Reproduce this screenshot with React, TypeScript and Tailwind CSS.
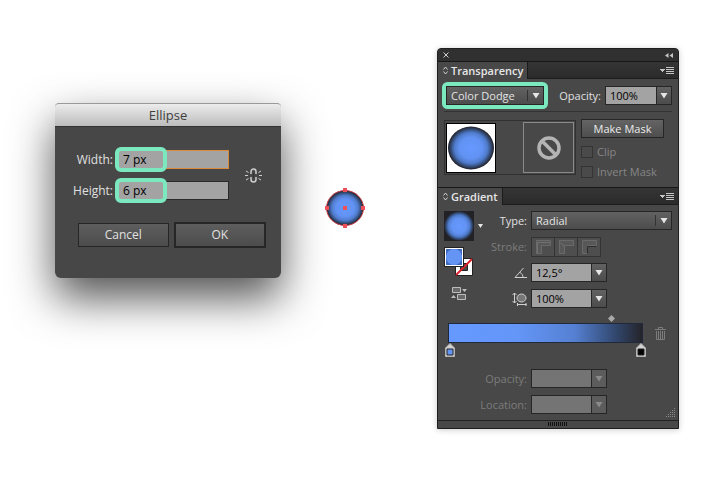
import { useState } from "react";
import type { ReactNode } from "react";

const FONT = "font-['Open_Sans','Noto_Sans',sans-serif]";

function Down({ dim = false }: { dim?: boolean }) {
  return (
    <svg width="8" height="6" viewBox="0 0 8 6" className={dim ? "text-[#8a8a8a]" : "text-[#e6e6e6]"}>
      <path d="M.5 0h7L4 5.500z" fill="currentColor" />
    </svg>
  );
}

function Picker({ id, options, label }: { id: string; options: string[]; label?: string }) {
  return (
    <div className="relative flex-1">
      <select
        id={id}
        aria-label={label}
        className="block h-[19px] w-full appearance-none border border-[#262626] bg-linear-to-b from-[#626262] to-[#4c4c4c] pr-5 pl-1 text-[11px] leading-4 font-medium text-[#e4e4e4] outline-none"
      >
        {options.map((o) => (
          <option key={o}>{o}</option>
        ))}
      </select>
      <span className="pointer-events-none absolute inset-y-1 right-1 flex items-center border-l border-[#333] pl-1">
        <Down />
      </span>
    </div>
  );
}

function Combo({ id, value, disabled = false }: { id: string; value: string; disabled?: boolean }) {
  const [text, setText] = useState(value);
  return (
    <div className="flex h-[19px] w-[76px] border border-[#262626]">
      <input
        id={id}
        value={text}
        disabled={disabled}
        onChange={(e) => setText(e.target.value)}
        className="w-0 min-w-0 flex-1 bg-[#a3a3a3] pl-1 text-[11px] leading-4 text-black outline-none disabled:bg-[#747474]"
      />
      <button
        type="button"
        aria-label="More values"
        disabled={disabled}
        className="flex w-[15px] items-center justify-center border-l border-[#262626] bg-linear-to-b from-[#626262] to-[#4c4c4c] disabled:from-[#5c5c5c] disabled:to-[#5c5c5c]"
      >
        <Down dim={disabled} />
      </button>
    </div>
  );
}

function PanelTab({ title }: { title: string }) {
  return (
    <div className="flex h-[18px] border-t border-[#171717] bg-linear-to-b from-[#353535] to-[#2a2a2a]">
      <h2 className="flex items-center gap-[3px] border-r border-[#1c1c1c] bg-[#484848] pr-1 pl-[5px] text-[11px] leading-4 font-semibold text-[#e6e6e6]">
        <svg width="5" height="9" viewBox="0 0 5 9" fill="none" stroke="#d0d0d0">
          <path d="M.5 3.500l2-2.500 2 2.500M.5 5.500l2 2.500 2-2.500" />
        </svg>
        {title}
      </h2>
      <div className="flex flex-1 items-center justify-end border-b border-[#1c1c1c] pr-1">
        <button type="button" aria-label={title + " menu"}>
          <svg width="14" height="9" viewBox="0 0 14 9" fill="#c4c4c4" shapeRendering="crispEdges">
            <path d="M0 3h5L2.500 6z" />
            <path d="M6 1h8v1H6zM6 3h8v1H6zM6 5h8v1H6zM6 7h8v1H6z" />
          </svg>
        </button>
      </div>
    </div>
  );
}

function SizeField({ id, label, value, active = false }: { id: string; label: string; value: string; active?: boolean }) {
  const [text, setText] = useState(value);
  return (
    <div className="flex items-center gap-1">
      <label htmlFor={id} className="w-[58px] text-right text-xs leading-4 font-medium text-[#e0e0e0]">
        {label}
      </label>
      <div className="relative flex-1">
        <input
          id={id}
          value={text}
          onChange={(e) => setText(e.target.value)}
          className={
            active
              ? "block h-[19px] w-full border border-[#d98a3c] bg-[#a3a3a3] pl-[5px] text-xs leading-4 text-black outline-none"
              : "block h-[19px] w-full border border-[#2a2a2a] bg-[#a3a3a3] pl-[5px] text-xs leading-4 text-black outline-none"
          }
        />
        <span className="pointer-events-none absolute -inset-y-[3px] -left-[2px] w-[52px] rounded-md border-4 border-[#7ce8c0]" />
      </div>
    </div>
  );
}

function LinkIcon() {
  return (
    <svg width="17" height="15" viewBox="0 0 17 15" fill="none" stroke="#cfcfcf">
      <path d="M6 6V3.500a2.500 2.500 0 0 1 5 0V6M6 9v2.500a2.500 2.500 0 0 0 5 0V9" strokeWidth="1.500" />
      <path d="M8.500 5v5" stroke="#333" />
      <path d="M0 7.500h3M14 7.500h3M1 3l2.500 1.500M16 3l-2.500 1.500M1 12l2.500-1.500M16 12l-2.500-1.500" />
    </svg>
  );
}

function EllipseDialog() {
  return (
    <form
      onSubmit={(e) => e.preventDefault()}
      className="mt-[55px] w-full max-w-[226px] rounded-md bg-[#474747] shadow-[0_20px_44px_0_rgba(0,0,0,0.68)]"
    >
      <h1 className="h-[23px] rounded-t-sm border-t border-[#999] bg-linear-to-b from-[#ececec] to-[#bdbdbd] text-center text-[13px] leading-[22px] text-[#404040]">
        Ellipse
      </h1>
      <div className="flex items-center gap-4 border-t border-[#333] pt-[23px] pr-[19px]">
        <div className="flex flex-1 flex-col gap-3">
          <SizeField id="width" label="Width:" value="7 px" active />
          <SizeField id="height" label="Height:" value="6 px" />
        </div>
        <button type="button" aria-label="Constrain proportions">
          <LinkIcon />
        </button>
      </div>
      <div className="mt-[22px] flex items-center gap-[5px] pr-[15px] pb-[30px] pl-[23px]">
        <button type="button" className="h-6 flex-1 border border-[#262626] bg-linear-to-b from-[#5e5e5e] to-[#4c4c4c] text-xs leading-4 font-medium text-[#e0e0e0]">
          Cancel
        </button>
        <button type="submit" className="h-[26px] flex-1 border-2 border-[#262626] bg-linear-to-b from-[#5e5e5e] to-[#4c4c4c] text-xs leading-4 font-medium text-[#e0e0e0]">
          OK
        </button>
      </div>
    </form>
  );
}

function SelectedCircle() {
  return (
    <svg width="40" height="40" viewBox="0 0 40 40" className="mt-[140px] shrink-0">
      <defs>
        <radialGradient id="ball">
          <stop offset="0" stopColor="#6699ff" />
          <stop offset=".5" stopColor="#6192f3" />
          <stop offset=".72" stopColor="#4f7bcb" />
          <stop offset=".88" stopColor="#32486f" />
          <stop offset="1" stopColor="#201f24" />
        </radialGradient>
      </defs>
      <ellipse cx="20" cy="20" rx="18.500" ry="17.500" fill="url(#ball)" stroke="#c8404c" />
      <path d="M18 0h4v4h-4zM18 36h4v4h-4zM0 18h4v4h-4zM36 18h4v4h-4zM18 18h4v4h-4z" fill="#ec4f58" />
    </svg>
  );
}

function Row({ label, id, children }: { label: ReactNode; id: string; children: ReactNode }) {
  return (
    <div className="flex h-[19px] items-center gap-1">
      <label htmlFor={id} className="flex w-[41px] justify-end text-[11px] leading-4 font-medium text-[#e0e0e0]">
        {label}
      </label>
      {children}
    </div>
  );
}

function Transparency() {
  return (
    <section>
      <PanelTab title="Transparency" />
      <div className="flex items-center gap-[15px] pt-[7px] pr-[6px] pb-[6px] pl-2">
        <div className="flex flex-1 rounded-xs ring-4 ring-[#7ce8c0]">
          <Picker id="blend" label="Blending mode" options={["Color Dodge", "Normal", "Multiply", "Screen"]} />
        </div>
        <div className="flex items-center gap-1">
          <label htmlFor="opacity" className="text-[11px] leading-4 font-medium text-[#e0e0e0]">
            Opacity:
          </label>
          <div className="flex w-[67px] [&>div]:w-full">
            <Combo id="opacity" value="100%" />
          </div>
        </div>
      </div>
      <div className="mx-[6px] flex gap-[5px] border-t border-[#333] pt-2 pb-[9px]">
        <div className="flex h-[55px] w-[132px] items-center justify-between border border-[#303030] px-px">
          <svg width="50" height="50" viewBox="0 0 50 50">
            <rect width="50" height="50" fill="#000" />
            <rect x="1" y="1" width="48" height="48" fill="#fff" />
            <ellipse cx="25" cy="25" rx="23" ry="21.500" fill="url(#ball)" />
          </svg>
          <div className="flex size-[51px] items-center justify-center border border-[#8a8a8a]">
            <svg width="24" height="24" viewBox="0 0 24 24" fill="none" stroke="#b4b4b4" strokeWidth="3.500">
              <circle cx="12" cy="12" r="10" />
              <path d="M5 5l14 14" />
            </svg>
          </div>
        </div>
        <div className="flex flex-col items-start gap-2">
          <button type="button" className="-mt-px h-[19px] w-[83px] border border-[#262626] bg-linear-to-b from-[#646464] to-[#4e4e4e] text-[11px] leading-4 font-medium text-[#ececec]">
            Make Mask
          </button>
          {["Clip", "Invert Mask"].map((name) => (
            <label key={name} className="flex h-3 items-center gap-1 text-[11px] leading-3 text-[#868686]">
              <input type="checkbox" disabled className="size-3 appearance-none border border-[#343434] bg-[#4a4a4a]" />
              {name}
            </label>
          ))}
        </div>
      </div>
    </section>
  );
}

function StrokeButtons() {
  const fold = ["M5.500 15.500v-11h13", "M5.500 4.500l4 4", "M9.500 15.500v-7h9"];
  return (
    <div className="flex h-[20px] border border-[#333]">
      {fold.map((d, i) => (
        <button
          key={d}
          type="button"
          disabled
          aria-label={"Stroke gradient " + (i + 1)}
          className="border-r border-[#333] bg-[#4e4e4e] last:border-r-0"
        >
          <svg width="22" height="18" viewBox="0 0 22 18" fill="none">
            <path d="M4.500 15.500v-13h14v5H9.500v8z" fill="#585858" stroke="#6a6a6a" />
            <path d={d} stroke={i === 2 ? "#2c2c2c" : "#707070"} />
          </svg>
        </button>
      ))}
    </div>
  );
}

function GradientTools() {
  return (
    <div className="flex w-[42px] shrink-0 flex-col">
      <button type="button" aria-label="Gradient swatch" className="flex items-center gap-1">
        <svg width="30" height="30" viewBox="0 0 30 30">
          <rect width="30" height="30" fill="#222226" />
          <ellipse cx="15" cy="15" rx="15" ry="15" fill="url(#ball)" />
        </svg>
        <svg width="5" height="4" viewBox="0 0 5 4">
          <path d="M0 0h5L2.500 4z" fill="#e6e6e6" />
        </svg>
      </button>
      <svg width="30" height="30" viewBox="0 0 30 30" className="mt-[6px]">
        <path d="M11.500 11.500h17v17h-17z" fill="#fff" stroke="#222" />
        <path d="M16.500 16.500h7v7h-7z" fill="#484848" stroke="#222" />
        <path d="M12 28l16-16" stroke="#d9202b" strokeWidth="2" />
        <path d="M0 0h20v20H0z" fill="#222" />
        <path d="M1 1h18v18H1z" fill="#fff" />
        <path d="M2 2h16v16H2z" fill="#3f69bd" />
        <circle cx="10" cy="10" r="8" fill="#6495f5" />
      </svg>
      <button type="button" aria-label="Reverse gradient" className="mt-[10px] ml-[7px]">
        <svg width="16" height="14" viewBox="0 0 16 14" fill="none" stroke="#bdbdbd">
          <path d="M1.500.5h8v5h-8zM6.500 7.500h8v5h-8z" fill="#6a6a6a" />
          <path d="M11 2h5l-2.500 3zM0 11h5L2.500 8z" fill="#bdbdbd" stroke="none" />
        </svg>
      </button>
    </div>
  );
}

function Stop({ color }: { color: string }) {
  return (
    <svg width="10" height="14" viewBox="0 0 10 14">
      <path d="M.5 13.500V5L5 .5 9.500 5v8.500z" fill="#d2d2d2" stroke="#b4b4b4" />
      <path d="M2 6h6v6H2z" fill={color} stroke="#222" />
    </svg>
  );
}

function GradientSlider() {
  return (
    <div className="mt-[7px] flex items-start gap-3 pr-[6px] pl-1">
      <div className="min-w-0 flex-1">
        <div className="flex justify-end pr-[28px]">
          <svg width="7" height="7" viewBox="0 0 7 7">
            <path d="M3.500 0L7 3.500 3.500 7 0 3.500z" fill="#a9a9a9" />
          </svg>
        </div>
        <div className="mt-px h-5 border border-[#20283c] bg-[linear-gradient(90deg,#6699ff_0%,#6496f8_35%,#5580d2_65%,#32486f_86%,#25242a_100%)]" />
        <div className="-mx-[3px] flex justify-between">
          <Stop color="#6495f5" />
          <Stop color="#000" />
        </div>
      </div>
      <button type="button" aria-label="Delete stop" className="mt-[12px]">
        <svg width="11" height="13" viewBox="0 0 11 13" fill="none" stroke="#7c7c7c">
          <path d="M0 2.500h11M3.500 2V.5h4V2M1.500 4v8.500h8V4M3.500 4v8M5.500 4v8M7.500 4v8" />
        </svg>
      </button>
    </div>
  );
}

function Gradient() {
  return (
    <section>
      <PanelTab title="Gradient" />
      <div className="px-[6px] pt-[6px]">
        <div className="flex">
          <GradientTools />
          <div className="flex min-w-0 flex-1 flex-col gap-[7px]">
            <Row id="type" label="Type:">
              <Picker id="type" options={["Radial", "Linear"]} />
            </Row>
            <div className="flex h-[19px] items-center gap-1">
              <span className="flex w-[41px] justify-end text-[11px] leading-4 text-[#7c7c7c]">Stroke:</span>
              <StrokeButtons />
            </div>
            <Row
              id="angle"
              label={
                <svg width="13" height="10" viewBox="0 0 13 10" fill="none" stroke="#d0d0d0" role="img" aria-label="Angle">
                  <path d="M9.500 0L1 9.500h12M6 4.500c2 1 3 3 3 5" />
                </svg>
              }
            >
              <Combo id="angle" value="12,5°" />
            </Row>
            <Row
              id="ratio"
              label={
                <svg width="15" height="14" viewBox="0 0 15 14" fill="none" stroke="#d0d0d0" role="img" aria-label="Aspect ratio">
                  <path d="M2.500 1v10M.5 3l2-2 2 2M.5 9l2 2 2-2M5 12.500h9.500M5.500 11v3M14 11v3" />
                  <ellipse cx="9.500" cy="6" rx="4.500" ry="4" fill="#777" />
                </svg>
              }
            >
              <Combo id="ratio" value="100%" />
            </Row>
          </div>
        </div>
        <GradientSlider />
        <div className="mt-3 flex flex-col gap-[7px] pb-[6px] text-[11px] leading-4 text-[#7c7c7c]">
          <div className="flex items-center gap-1">
            <label htmlFor="stop-opacity" className="w-[83px] text-right">
              Opacity:
            </label>
            <Combo id="stop-opacity" value="" disabled />
          </div>
          <div className="flex items-center gap-1">
            <label htmlFor="stop-location" className="w-[83px] text-right">
              Location:
            </label>
            <Combo id="stop-location" value="" disabled />
            <svg width="10" height="10" viewBox="0 0 10 10" className="-mr-1 -mb-1 ml-auto self-end" fill="none" stroke="#8a8a8a" strokeDasharray="1 1">
              <path d="M8 .5h2M6 2.500h4M4 4.500h6M2 6.500h8M0 8.500h10" />
            </svg>
          </div>
        </div>
      </div>
      <div className="flex h-2 items-start justify-center border-t border-[#222] pt-px">
        <svg width="20" height="4" viewBox="0 0 20 4" stroke="#111" strokeWidth="4" strokeDasharray="1 1">
          <path d="M0 2h20" />
        </svg>
      </div>
    </section>
  );
}

export default function App() {
  return (
    <main className={`flex min-h-screen items-start bg-white pt-12 pr-11 pl-[55px] ${FONT}`}>
      <EllipseDialog />
      <div className="ml-11 shrink-0">
        <SelectedCircle />
      </div>
      <aside className="ml-auto w-full max-w-[242px] rounded-t-sm border border-[#1f1f1f] bg-[#484848] shadow-[0_1px_6px_rgba(0,0,0,0.2)]">
        <div className="flex h-3 items-center justify-between rounded-t-sm bg-[#303030] px-[5px]">
          <button type="button" aria-label="Close panel">
            <svg width="6" height="6" viewBox="0 0 6 6" stroke="#d0d0d0" className="block">
              <path d="M.5.5l5 5M5.500.5l-5 5" />
            </svg>
          </button>
          <button type="button" aria-label="Collapse panel">
            <svg width="8" height="5" viewBox="0 0 8 5" fill="#c4c4c4" className="block">
              <path d="M3.500 0v5L0 2.500zM8 0v5L4.500 2.500z" />
            </svg>
          </button>
        </div>
        <Transparency />
        <Gradient />
      </aside>
    </main>
  );
}
